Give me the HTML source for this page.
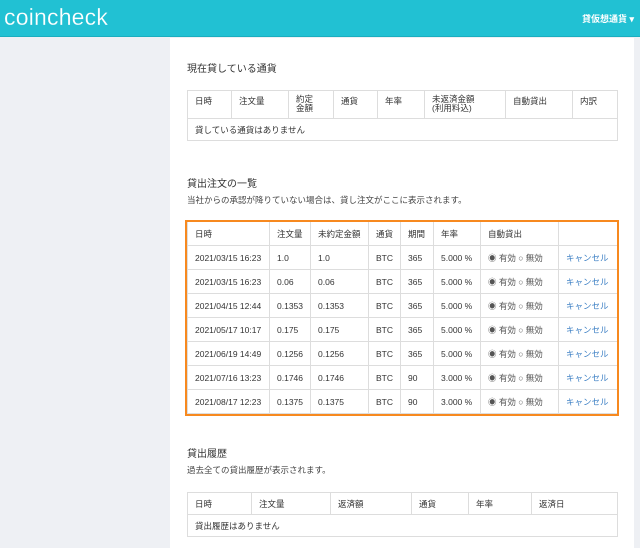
<!DOCTYPE html>
<html><head><meta charset="utf-8"><style>
*{margin:0;padding:0;box-sizing:border-box}
body{width:640px;height:548px;overflow:hidden;background:#eef0f4;font-family:"Liberation Sans","Noto Sans CJK JP",sans-serif;color:#444;font-size:9px;position:relative}
.hd{position:absolute;left:0;top:0;width:640px;height:37px;background:#21c1d3;border-bottom:1px solid #1aaebf}
.logo{position:absolute;left:4px;top:4px;color:#fff;font-size:23px;letter-spacing:0.2px;-webkit-text-stroke:0.2px #21c1d3}
.menu{position:absolute;right:6px;top:12px;color:#fff;font-size:9px;font-weight:bold}
.main{position:absolute;left:170px;top:38px;width:464px;height:510px;background:#fff}
.t{position:absolute;left:187px;font-size:10px;color:#333}
.s{position:absolute;left:187px;font-size:8.5px;color:#444}
table{position:absolute;border-collapse:collapse;table-layout:fixed;font-size:8.5px}
td{border:1px solid #ddd;padding:0 0 0 7px;vertical-align:middle;white-space:nowrap;overflow:hidden;color:#333}
.a{color:#3c7fc4}
.r{color:#555}
.box{position:absolute;left:185px;top:220px;width:434px;height:196px;border:2px solid #f7891f}
</style></head><body>
<div class="hd"><div class="logo">coincheck</div><div class="menu">貸仮想通貨 ▾</div></div>
<div class="main"></div>
<div class="t" style="top:60px">現在貸している通貨</div>
<table style="left:187px;top:90px;width:430px">
<colgroup><col width="44"><col width="57"><col width="45"><col width="44"><col width="47"><col width="81"><col width="67"><col width="45"></colgroup>
<tr style="height:28px"><td style="vertical-align:top;padding-top:4px">日時</td><td style="vertical-align:top;padding-top:4px">注文量</td><td style="vertical-align:top;padding-top:4px;line-height:9px">約定<br>金額</td><td style="vertical-align:top;padding-top:4px">通貨</td><td style="vertical-align:top;padding-top:4px">年率</td><td style="vertical-align:top;padding-top:4px;line-height:9px">未返済金額<br>(利用料込)</td><td style="vertical-align:top;padding-top:4px">自動貸出</td><td style="vertical-align:top;padding-top:4px">内訳</td></tr>
<tr style="height:22px"><td colspan="8">貸している通貨はありません</td></tr>
</table>
<div class="t" style="top:175px">貸出注文の一覧</div>
<div class="s" style="top:194px">当社からの承認が降りていない場合は、貸し注文がここに表示されます。</div>
<table style="left:187px;top:221px;width:430px">
<colgroup><col width="82"><col width="41"><col width="58"><col width="32"><col width="33"><col width="47"><col width="78"><col width="59"></colgroup>
<tr style="height:24px"><td>日時</td><td>注文量</td><td>未約定金額</td><td>通貨</td><td>期間</td><td>年率</td><td>自動貸出</td><td></td></tr>
<tr style="height:24px"><td>2021/03/15 16:23</td><td>1.0</td><td>1.0</td><td>BTC</td><td>365</td><td>5.000 %</td><td class="r">◉ 有効 ○ 無効</td><td class="a">キャンセル</td></tr>
<tr style="height:24px"><td>2021/03/15 16:23</td><td>0.06</td><td>0.06</td><td>BTC</td><td>365</td><td>5.000 %</td><td class="r">◉ 有効 ○ 無効</td><td class="a">キャンセル</td></tr>
<tr style="height:24px"><td>2021/04/15 12:44</td><td>0.1353</td><td>0.1353</td><td>BTC</td><td>365</td><td>5.000 %</td><td class="r">◉ 有効 ○ 無効</td><td class="a">キャンセル</td></tr>
<tr style="height:24px"><td>2021/05/17 10:17</td><td>0.175</td><td>0.175</td><td>BTC</td><td>365</td><td>5.000 %</td><td class="r">◉ 有効 ○ 無効</td><td class="a">キャンセル</td></tr>
<tr style="height:24px"><td>2021/06/19 14:49</td><td>0.1256</td><td>0.1256</td><td>BTC</td><td>365</td><td>5.000 %</td><td class="r">◉ 有効 ○ 無効</td><td class="a">キャンセル</td></tr>
<tr style="height:24px"><td>2021/07/16 13:23</td><td>0.1746</td><td>0.1746</td><td>BTC</td><td>90</td><td>3.000 %</td><td class="r">◉ 有効 ○ 無効</td><td class="a">キャンセル</td></tr>
<tr style="height:24px"><td>2021/08/17 12:23</td><td>0.1375</td><td>0.1375</td><td>BTC</td><td>90</td><td>3.000 %</td><td class="r">◉ 有効 ○ 無効</td><td class="a">キャンセル</td></tr>
</table>
<div class="box"></div>
<div class="t" style="top:445px">貸出履歴</div>
<div class="s" style="top:464px">過去全ての貸出履歴が表示されます。</div>
<table style="left:187px;top:492px;width:430px">
<colgroup><col width="64"><col width="79"><col width="81"><col width="57"><col width="63"><col width="86"></colgroup>
<tr style="height:22px"><td>日時</td><td>注文量</td><td>返済額</td><td>通貨</td><td>年率</td><td>返済日</td></tr>
<tr style="height:22px"><td colspan="6">貸出履歴はありません</td></tr>
</table>
</body></html>
